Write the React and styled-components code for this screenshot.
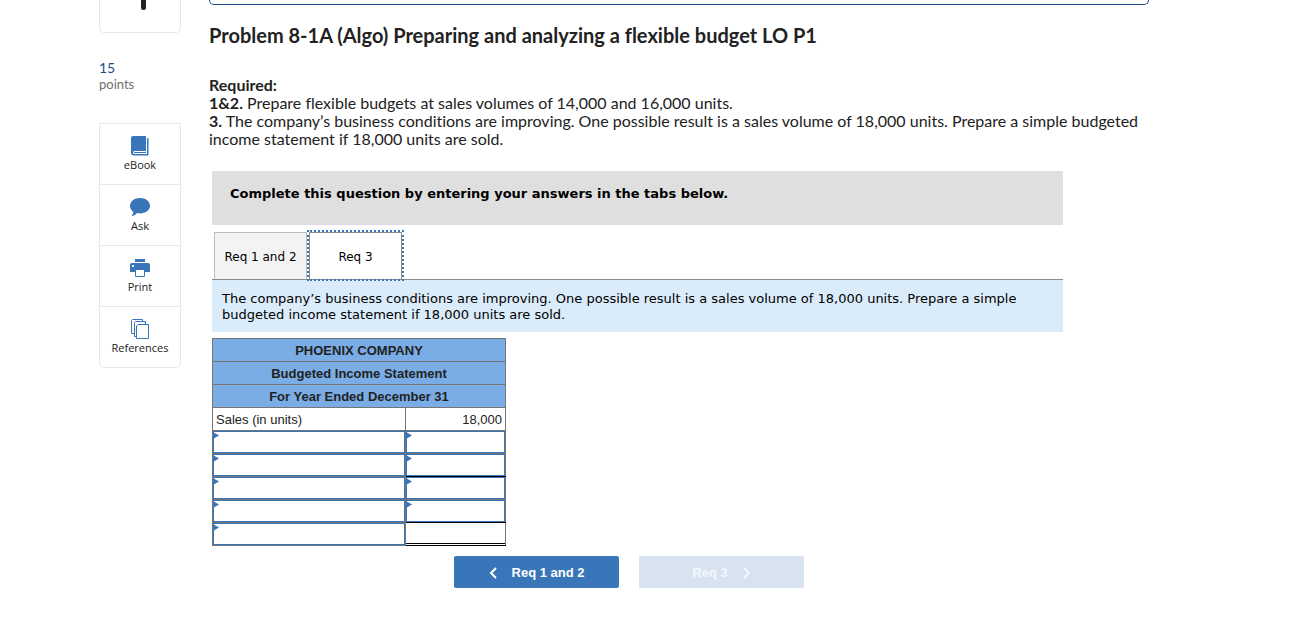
import React, { useState } from 'react'
import styled, { createGlobalStyle } from 'styled-components'

const BLUE = '#3875b9'

const GlobalStyle = createGlobalStyle`
  * {
    box-sizing: border-box;
  }

  body {
    margin: 0;
    background: #fff;
    color: #222;
    font-family: Lato, 'Open Sans', sans-serif;
    font-variant-ligatures: none;
  }
`

const Page = styled.div`
  display: grid;
  grid-template-columns: 82px minmax(0, 940px);
  gap: 28px;
  padding: 0 40px 38px 99px;
`

const Sidebar = styled.aside`
  display: flex;
  flex-direction: column;
`

const QuestionNumber = styled.div`
  display: flex;
  justify-content: center;
  height: 33px;
  margin-bottom: 26px;
  border: 1px solid #e8e8e8;
  border-top: none;
  border-radius: 0 0 5px 5px;
`

const Points = styled.div`
  margin-bottom: 31px;
  color: #707070;
  font-size: 13px;
  line-height: 16px;
`

const PointsValue = styled.div`
  color: #1d4c85;
  font-size: 14px;
  line-height: 17px;
`

const Tools = styled.nav`
  display: flex;
  flex-direction: column;
  border: 1px solid #e8e8e8;
  border-radius: 0 0 5px 5px;
`

const ToolButton = styled.button`
  display: flex;
  flex-direction: column;
  align-items: center;
  height: 61px;
  padding: 11px 0 0;
  border: none;
  border-bottom: 1px solid #e8e8e8;
  background: transparent;
  color: #222;
  font-family: 'Open Sans', sans-serif;
  font-size: 11px;
  line-height: 16px;
  cursor: pointer;

  &:last-child {
    height: 60px;
    border-bottom: none;
  }
`

const Content = styled.main`
  min-width: 0;
`

const NoticeEdge = styled.div`
  height: 5px;
  border: 1px solid #1d4c85;
  border-top: none;
  border-radius: 0 0 5px 5px;
`

const Title = styled.h1`
  margin: 18px 0 29px;
  font-size: 20px;
  font-weight: 700;
  line-height: 24px;
`

const Problem = styled.div`
  margin-bottom: 23px;
  font-size: 16px;
  line-height: 18px;

  p {
    margin: 0;
  }
`

const Answer = styled.section`
  max-width: 851px;
  margin-left: 3px;
  color: #000;
  font-family: Verdana, 'DejaVu Sans', sans-serif;
  font-size: 13px;
  line-height: 16px;
`

const Instruction = styled.div`
  height: 54px;
  padding: 15px 18px;
  background: #dfdfdf;
  font-weight: 700;
`

const TabList = styled.div`
  display: flex;
  gap: 2px;
  margin-top: 7px;
  padding-left: 2px;
`

const Tab = styled.button`
  position: relative;
  z-index: ${({ $active }) => ($active ? 1 : 0)};
  width: 93px;
  height: 47px;
  padding: 2px 0 0;
  border: 1px solid ${({ $active }) => ($active ? '#8c8c8c' : '#bdbdbd')};
  border-bottom: none;
  outline: ${({ $active }) => ($active ? `2px dotted ${BLUE}` : 'none')};
  background: ${({ $active }) => ($active ? '#fff' : '#f3f3f3')};
  color: #000;
  font: 12px/16px Verdana, 'DejaVu Sans', sans-serif;
  cursor: pointer;
`

const Prompt = styled.p`
  margin: 0 0 6px;
  padding: 11px 10px 9px;
  border-top: 1px solid #8c8c8c;
  background: #daecfa;
`

const Sheet = styled.table`
  border-collapse: collapse;
  table-layout: fixed;
  width: 294px;
  color: #222;
  font: 13px/20px 'Liberation Sans', Arial, sans-serif;
`

const HeadCell = styled.th`
  height: 23px;
  padding: 2px 0 0;
  border: 1px solid #757575;
  background: #7aace6;
  font-weight: 700;
  text-align: center;
`

const Cell = styled.td`
  height: 23px;
  padding: ${({ $entry }) => ($entry ? '0' : '2px 3px 0')};
  border: 1px solid #757575;
  border-bottom-color: ${({ $ruled }) => ($ruled ? '#000' : '#757575')};
  text-align: ${({ $right }) => ($right ? 'right' : 'left')};
`

const Entry = styled.div`
  position: relative;
  height: 22px;

  &::before {
    content: '';
    position: absolute;
    top: 1px;
    left: 0;
    width: 6px;
    height: 7px;
    background: ${BLUE};
    clip-path: polygon(0 0, 100% 50%, 0 100%);
  }
`

const EntryInput = styled.input`
  display: block;
  width: 100%;
  height: 22px;
  padding: 0 8px;
  border: 1px solid ${BLUE};
  border-radius: 0;
  outline: none;
  background: #fff;
  font: inherit;
  text-align: ${({ $right }) => ($right ? 'right' : 'left')};
`

const Total = styled.div`
  height: 21px;
  margin-bottom: 1px;
  border-bottom: 1px solid #000;
`

const Pager = styled.div`
  display: flex;
  justify-content: center;
  gap: 20px;
  margin-top: 10px;
  padding-right: 17px;
`

const PagerButton = styled.button`
  display: flex;
  align-items: center;
  justify-content: center;
  gap: 15px;
  width: 165px;
  height: 32px;
  padding: 1px 0 0;
  border: none;
  border-radius: 2px;
  background: ${BLUE};
  color: #fff;
  font: 700 13px/16px 'Liberation Sans', Arial, sans-serif;
  cursor: pointer;

  &:disabled {
    background: #d7e3f1;
    color: #f4f8fc;
    cursor: default;
  }
`

const BookIcon = () => (
  <svg width="20" height="22" viewBox="0 0 20 22" aria-hidden="true">
    <path d="M3 1h13v15H4.500q-1.500 0-1.500 1.500Q3 19 4.500 19H17V3h1v17.500H4Q1 20.500 1 17.500V3q0-2 2-2z" fill={BLUE} />
    <path d="M4 17.500h12" stroke={BLUE} />
    <path d="M18.500 3v17" stroke="#8ac4ea" />
  </svg>
)

const AskIcon = () => (
  <svg width="20" height="22" viewBox="0 0 20 22" aria-hidden="true">
    <path d="M10 2c5.600 0 10 3.400 10 7.700s-4.400 7.700-10 7.700c-1 0-2-.1-2.900-.3C5.600 18.800 3.700 20 1.300 20.300c1-1 1.800-2.500 2-4.600C1.200 14.300 0 12.200 0 9.700 0 5.400 4.400 2 10 2z" fill={BLUE} />
  </svg>
)

const PrintIcon = () => (
  <svg width="20" height="22" viewBox="0 0 20 22" aria-hidden="true">
    <path d="M5 2h10v3H5zM0 8q0-2 2-2h16q2 0 2 2v7H0z" fill={BLUE} />
    <path d="M5 5.500h10" stroke="#fff" />
    <path d="M5.500 12.500h9v7h-9z" fill="#fff" stroke={BLUE} />
    <path d="M2 8h2v2H2z" fill="#fff" />
  </svg>
)

const ReferencesIcon = () => (
  <svg width="20" height="22" viewBox="0 0 20 22" aria-hidden="true" fill="#fff" stroke={BLUE}>
    <path d="M2.500 1.500h10v14h-11v-13z" />
    <path d="M5.500 3.500h10v15H4.500v-14z" />
    <path d="M8 6.500h10.500v14H6.500V8z" />
  </svg>
)

const Chevron = ({ d }) => (
  <svg width="8" height="12" viewBox="0 0 8 12" aria-hidden="true">
    <path d={d} fill="none" stroke="currentColor" strokeWidth="2" />
  </svg>
)

const tools = [
  { label: 'eBook', Icon: BookIcon },
  { label: 'Ask', Icon: AskIcon },
  { label: 'Print', Icon: PrintIcon },
  { label: 'References', Icon: ReferencesIcon },
]

const headings = ['PHOENIX COMPANY', 'Budgeted Income Statement', 'For Year Ended December 31']

const rows = [
  { id: 1 },
  { id: 2, ruled: true },
  { id: 3 },
  { id: 4, ruled: true },
  { id: 5, ruled: true, total: true },
]

const App = () => {
  const [tab, setTab] = useState(2)

  return (
    <>
      <GlobalStyle />
      <Page>
        <Sidebar>
          <QuestionNumber>
            <svg width="12" height="11" viewBox="0 0 12 11" aria-hidden="true">
              <path d="M9.500 0v7.500" stroke="#222" strokeWidth="5" strokeLinecap="round" />
            </svg>
          </QuestionNumber>
          <Points>
            <PointsValue>15</PointsValue>
            points
          </Points>
          <Tools>
            {tools.map(({ label, Icon }) => (
              <ToolButton key={label} type="button">
                <Icon />
                {label}
              </ToolButton>
            ))}
          </Tools>
        </Sidebar>

        <Content>
          <NoticeEdge />
          <Title>Problem 8-1A (Algo) Preparing and analyzing a flexible budget LO P1</Title>
          <Problem>
            <p>
              <b>Required:</b>
            </p>
            <p>
              <b>1&amp;2.</b> Prepare flexible budgets at sales volumes of 14,000 and 16,000 units.
            </p>
            <p>
              <b>3.</b> The company’s business conditions are improving. One possible result is a sales
              volume of 18,000 units. Prepare a simple budgeted income statement if 18,000 units are sold.
            </p>
          </Problem>

          <Answer>
            <Instruction>Complete this question by entering your answers in the tabs below.</Instruction>
            <TabList role="tablist">
              <Tab type="button" role="tab" aria-selected={tab === 1} $active={tab === 1} onClick={() => setTab(1)}>
                Req 1 and 2
              </Tab>
              <Tab type="button" role="tab" aria-selected={tab === 2} $active={tab === 2} onClick={() => setTab(2)}>
                Req 3
              </Tab>
            </TabList>
            <Prompt>
              The company’s business conditions are improving. One possible result is a sales volume of
              18,000 units. Prepare a simple budgeted income statement if 18,000 units are sold.
            </Prompt>

            <Sheet>
              <colgroup>
                <col width="193" />
                <col width="100" />
              </colgroup>
              <thead>
                {headings.map((text) => (
                  <tr key={text}>
                    <HeadCell colSpan={2}>{text}</HeadCell>
                  </tr>
                ))}
              </thead>
              <tbody>
                <tr>
                  <Cell>Sales (in units)</Cell>
                  <Cell $right>18,000</Cell>
                </tr>
                {rows.map(({ id, ruled, total }) => (
                  <tr key={id}>
                    <Cell $entry>
                      <Entry>
                        <EntryInput aria-label={`Item ${id}`} />
                      </Entry>
                    </Cell>
                    <Cell $entry $ruled={ruled}>
                      {total ? (
                        <Total />
                      ) : (
                        <Entry>
                          <EntryInput aria-label={`Amount ${id}`} $right />
                        </Entry>
                      )}
                    </Cell>
                  </tr>
                ))}
              </tbody>
            </Sheet>

            <Pager>
              <PagerButton type="button" onClick={() => setTab(1)}>
                <Chevron d="M7 1L2 6l5 5" />
                Req 1 and 2
              </PagerButton>
              <PagerButton type="button" disabled={tab === 2} onClick={() => setTab(2)}>
                Req 3
                <Chevron d="M1 1l5 5-5 5" />
              </PagerButton>
            </Pager>
          </Answer>
        </Content>
      </Page>
    </>
  )
}

export default App
